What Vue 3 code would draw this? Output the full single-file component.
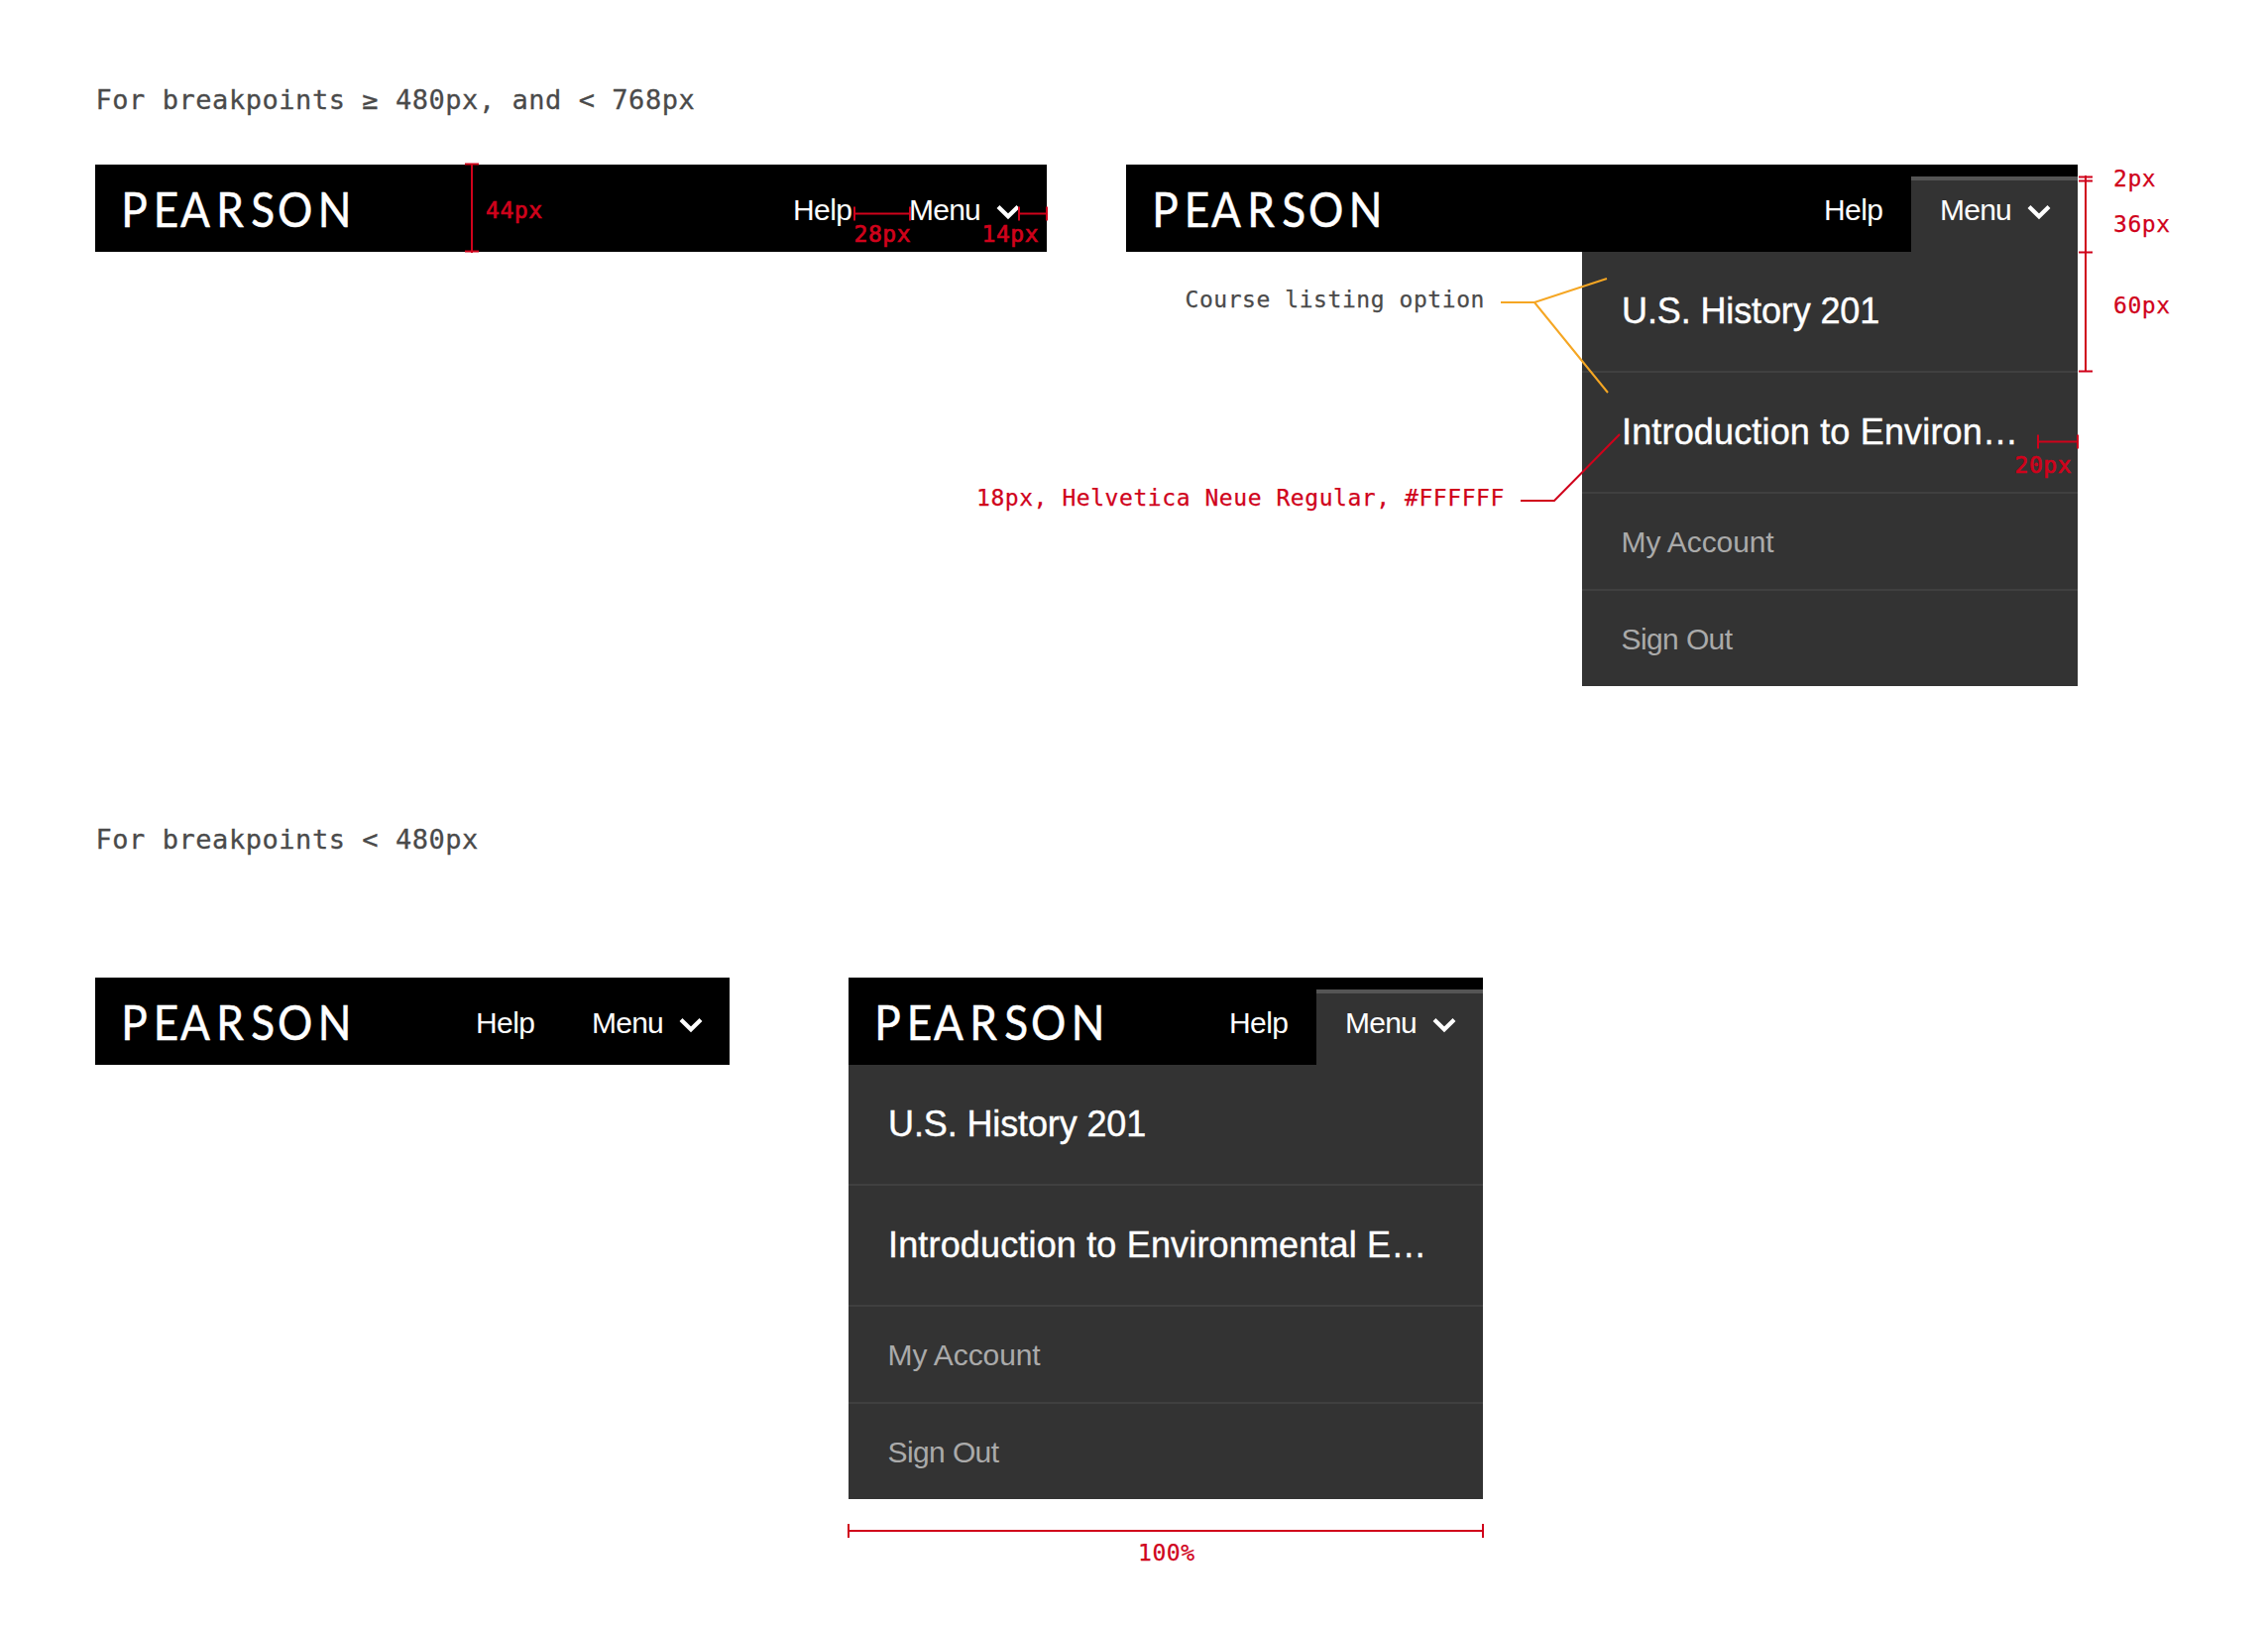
<script setup>
const courses = {
  short: [
    { name: 'U.S. History 201', tight: true },
    { name: 'Introduction to Environ…' },
  ],
  long: [
    { name: 'U.S. History 201', tight: true },
    { name: 'Introduction to Environmental E…' },
  ],
}

const groups = [
  {
    id: 'medium',
    title: 'For breakpoints ≥ 480px, and < 768px',
    headers: [
      { id: 'm-closed', open: false, courses: [] },
      { id: 'm-open', open: true, courses: courses.short },
    ],
  },
  {
    id: 'small',
    title: 'For breakpoints < 480px',
    headers: [
      { id: 's-closed', open: false, courses: [] },
      { id: 's-open', open: true, courses: courses.long },
    ],
  },
]

const rules = [
  'M476 165V255M469 165.5h14M469 253.5h14',
  'M862 215.5H918M862 208.5v14M918 208.5v14',
  'M1028 215.5H1056M1028 208.5v14M1056 208.5v14',
  'M2104 177V375.5M2097 178.5h14M2097 182.5h14M2097 254.5h14M2097 374.5h14',
  'M2056 445.5H2096M2056 438.5v14M2096 438.5v14',
  'M856 1544H1496M856 1537v14M1496 1537v14',
  'M1534 505H1568L1634 438',
]

const labels = [
  { text: '44px', x: 490, y: 220, strong: true },
  { text: '28px', x: 861.5, y: 244, strong: true },
  { text: '14px', x: 990.5, y: 244, strong: true },
  { text: '2px', x: 2132, y: 188 },
  { text: '36px', x: 2132, y: 234 },
  { text: '60px', x: 2132, y: 316 },
  { text: '20px', x: 2032.5, y: 476.5, strong: true },
  { text: '100%', x: 1148, y: 1574 },
  { text: '18px, Helvetica Neue Regular, #FFFFFF', x: 985, y: 510 },
]
</script>

<template>
  <main class="sheet">
    <section v-for="g in groups" :key="g.id" class="group" :class="g.id">
      <h2>{{ g.title }}</h2>
      <div class="examples">
        <div v-for="h in g.headers" :key="h.id" class="header">
          <div class="bar">
            <svg class="logo" width="232" height="44" viewBox="0 0 232 44">
              <text transform="scale(.92 1)" x="-1.8 33.5 63 102.5 140.5 169.5 214" y="39">PEARSON</text>
            </svg>
            <a class="help">Help</a>
            <a class="menu" :class="{ open: h.open }">
              <span>Menu</span>
              <svg class="chevron" width="24" height="16" viewBox="0 0 24 16">
                <path d="M2 2.5L12 12.3L22 2.5" />
              </svg>
            </a>
          </div>
          <ul v-if="h.open" class="dropdown">
            <li v-for="c in h.courses" :key="c.name" class="course" :class="{ tight: c.tight }">{{ c.name }}</li>
            <li class="account">My Account</li>
            <li class="signout">Sign Out</li>
          </ul>
        </div>
      </div>
    </section>

    <svg class="notes" width="2288" height="1640" viewBox="0 0 2288 1640">
      <path v-for="d in rules" :key="d" class="rule" :d="d" />
      <path class="pointer" d="M1514 305H1548L1621 281M1548 305L1622 396" />
      <text
        v-for="l in labels"
        :key="l.text"
        class="label"
        :class="{ strong: l.strong }"
        :x="l.x"
        :y="l.y"
      >{{ l.text }}</text>
      <text class="label dark" x="1195.5" y="310">Course listing option</text>
    </svg>
  </main>
</template>

<style>
body {
  margin: 0;
  background: #fff;
}
</style>

<style scoped>
.sheet {
  position: relative;
  box-sizing: border-box;
  width: 2288px;
  height: 1640px;
  padding: 80px 0 0 96px;
  overflow: hidden;
  font-family: "Liberation Sans", Arial, sans-serif;
}
.group.medium {
  height: 746px;
}
h2 {
  margin: 0;
  height: 86px;
  padding-left: 0.5px;
  font: 400 27px/41px "DejaVu Sans Mono", monospace;
  box-sizing: border-box;
  letter-spacing: 0.545px;
  -webkit-text-stroke: 0.3px #4a4a4a;
  color: #4a4a4a;
}
.small h2 {
  height: 160px;
}
.examples {
  display: flex;
  align-items: flex-start;
  gap: 80px;
}
.small .examples {
  gap: 120px;
}
.header {
  display: flex;
  flex-direction: column;
  align-items: flex-end;
  width: 960px;
}
.small .header {
  width: 640px;
}
.bar {
  display: flex;
  align-items: flex-end;
  box-sizing: border-box;
  width: 100%;
  height: 88px;
  padding-left: 28px;
  background: #000;
  color: #fff;
  font-size: 30px;
  letter-spacing: -0.75px;
}
.logo {
  align-self: flex-start;
  margin: 24px auto 0 0;
  overflow: visible;
}
.logo text {
  fill: #fff;
  stroke: #fff;
  stroke-width: 0.5px;
  font-family: Lato, sans-serif;
  font-size: 48px;
  letter-spacing: 0;
}
.help {
  width: 88px;
  line-height: 34px;
  padding-bottom: 25px;
  letter-spacing: -0.6px;
}
.menu {
  display: flex;
  align-items: flex-start;
  box-sizing: border-box;
  width: 168px;
  height: 76px;
  padding: 13px 27px 0 29px;
  border-top: 4px solid transparent;
  line-height: 34px;
}
.menu.open {
  background: #333;
  border-top-color: #555;
}
.chevron {
  margin: 10.5px 0 0 auto;
}
.chevron path {
  fill: none;
  stroke: #fff;
  stroke-width: 4.2;
}
.dropdown {
  box-sizing: border-box;
  width: 500px;
  margin: 0;
  padding: 0;
  list-style: none;
  background: #333;
}
.small .dropdown {
  width: 100%;
}
.dropdown li {
  box-sizing: border-box;
  padding-left: 40px;
  white-space: nowrap;
}
.course {
  height: 122px;
  border-bottom: 2px solid #404040;
  color: #fff;
  font-size: 36px;
  line-height: 119px;
  letter-spacing: 0.16px;
  -webkit-text-stroke: 0.4px #fff;
}
.course.tight {
  letter-spacing: -0.12px;
}
.dropdown .account,
.dropdown .signout {
  height: 98px;
  padding-left: 39.5px;
  border-bottom: 2px solid #404040;
  color: #aaa;
  font-size: 30px;
  line-height: 98px;
  letter-spacing: -0.1px;
}
.dropdown .signout {
  height: 96px;
  border-bottom: 0;
  letter-spacing: -0.6px;
}
.notes {
  position: absolute;
  left: 0;
  top: 0;
}
.rule,
.pointer {
  fill: none;
  stroke: #d0021b;
  stroke-width: 2;
}
.pointer {
  stroke: #f5a623;
}
.label {
  font-family: "DejaVu Sans Mono", monospace;
  font-size: 23px;
  letter-spacing: 0.555px;
  fill: #d0021b;
  stroke: #d0021b;
  stroke-width: 0.25px;
}
.label.strong {
  stroke-width: 0.7px;
}
.label.dark {
  fill: #4a4a4a;
  stroke: #4a4a4a;
}
</style>
